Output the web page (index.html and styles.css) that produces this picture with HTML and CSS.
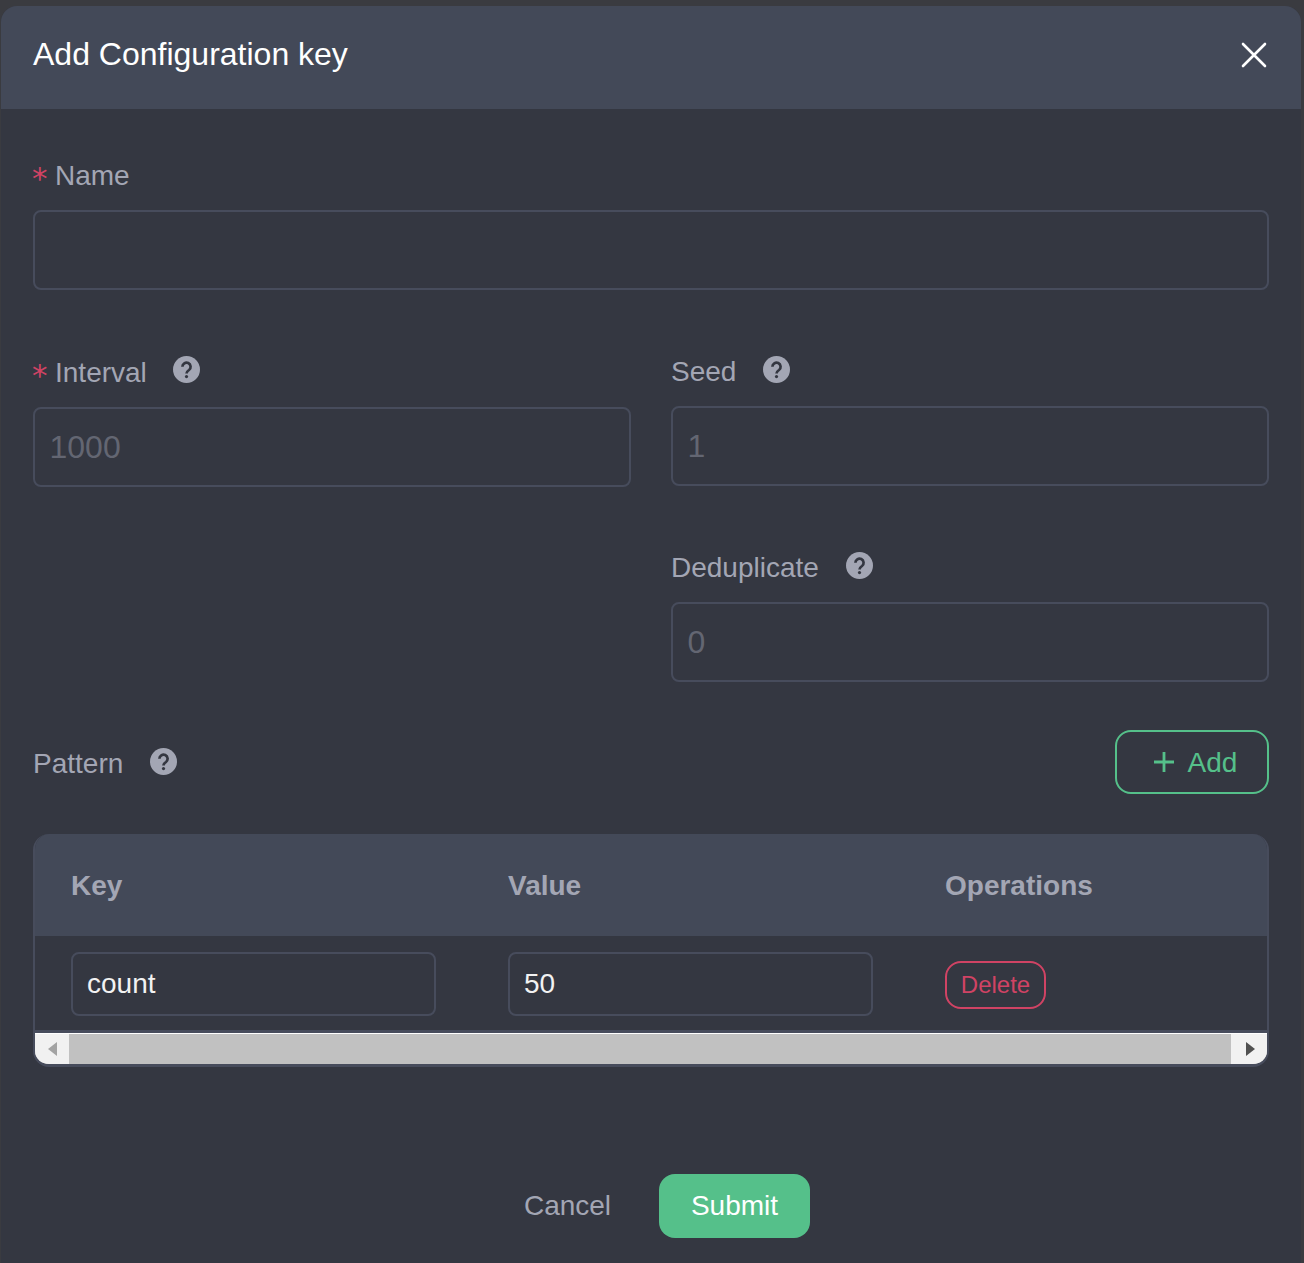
FILE: index.html

```html
<!DOCTYPE html>
<html>
<head>
<meta charset="utf-8"/>
<title>Add Configuration key</title>
<link rel="stylesheet" href="styles.css">
</head>
<body>
<svg class="icon-defs" width="0" height="0">
  <symbol id="help" viewBox="0 0 27 27">
    <circle class="help-disc" cx="13.5" cy="13.5" r="13.5"/>
    <path class="help-mark" d="M9.4 10.8a4.1 4.1 0 1 1 6.6 3.2c-1.6 1.1-2.5 1.8-2.5 3.4"/>
    <circle class="help-dot" cx="13.5" cy="20.6" r="1.6"/>
  </symbol>
</svg>
<div class="modal">
  <div class="modal-header">
    <h1>Add Configuration key</h1>
    <svg class="close-icon" viewBox="0 0 26 26"><path d="M2 2 L24 24 M24 2 L2 24"/></svg>
  </div>
  <div class="modal-body">
    <div class="form-item">
      <label class="form-label"><span class="required">*</span>Name</label>
      <div class="input"></div>
    </div>
    <div class="form-grid">
      <div class="form-item interval-item">
        <label class="form-label"><span class="required">*</span>Interval
          <svg class="help-icon"><use href="#help"/></svg>
        </label>
        <div class="input placeholder">1000</div>
      </div>
      <div class="form-item">
        <label class="form-label">Seed
          <svg class="help-icon"><use href="#help"/></svg>
        </label>
        <div class="input placeholder">1</div>
      </div>
      <div class="form-item dedup-item">
        <label class="form-label">Deduplicate
          <svg class="help-icon"><use href="#help"/></svg>
        </label>
        <div class="input placeholder">0</div>
      </div>
    </div>
    <div class="pattern-row">
      <label class="form-label">Pattern
        <svg class="help-icon"><use href="#help"/></svg>
      </label>
      <button class="btn-add">
        <svg class="plus-icon" viewBox="0 0 20 20"><path d="M10 0 V20 M0 10 H20"/></svg>
        Add
      </button>
    </div>
    <div class="table-wrap">
      <table class="pattern-table">
        <thead>
          <tr><th>Key</th><th>Value</th><th>Operations</th></tr>
        </thead>
        <tbody>
          <tr>
            <td><div class="cell-input">count</div></td>
            <td><div class="cell-input">50</div></td>
            <td><button class="btn-delete">Delete</button></td>
          </tr>
        </tbody>
      </table>
      <div class="scrollbar">
        <div class="scroll-btn"><span class="arrow-left"></span></div>
        <div class="scroll-thumb"></div>
        <div class="scroll-btn scroll-btn-right"><span class="arrow-right"></span></div>
      </div>
    </div>
    <div class="modal-footer">
      <button class="btn-cancel">Cancel</button>
      <button class="btn-submit">Submit</button>
    </div>
  </div>
</div>
</body>
</html>
```

FILE: styles.css

```css
html, body { margin: 0; height: 100%; }
body {
  height: 1263px; overflow: hidden;
  background: #3a3b40; padding: 6px 3px 0 1px; box-sizing: border-box;
  font-family: "Liberation Sans", Arial, sans-serif;
}
.icon-defs { display: block; }
.modal { background: #343741; border-radius: 16px 16px 0 0; height: 1257px; }
.modal-header {
  height: 103px; box-sizing: border-box; padding: 0 34px 6px 32px;
  background: #434958; border-radius: 16px 16px 0 0;
  display: flex; align-items: center; justify-content: space-between;
}
.modal-header h1 { margin: 0; font-size: 32px; font-weight: 400; color: #fff; }
.close-icon { width: 26px; height: 26px; fill: none; stroke: #fff; stroke-width: 2.6; stroke-linecap: round; }
.modal-body { padding: 45px 32px 0; }
.form-item { margin-bottom: 60px; }
.interval-item { padding-top: 1px; margin-bottom: 59px; }
.form-grid { display: grid; grid-template-columns: 598px 598px; column-gap: 40px; }
.dedup-item { grid-column: 2; margin-bottom: 48px; }
.form-label {
  display: flex; align-items: center; height: 44px; margin-bottom: 12px;
  font-size: 28px; color: #a3a6b4;
}
.required {
  display: inline-block; width: 14px; margin-right: 8px; height: 28px;
  color: #d04364; font-family: "DejaVu Sans", sans-serif; font-size: 31px; line-height: 32px;
  text-indent: -1px;
}
.help-icon { width: 27px; height: 27px; margin: -5px 0 0 27px; }
.interval-item .help-icon { margin-top: -7px; margin-left: 26.5px; }
.help-disc { fill: #a3a6b4; }
.help-mark { fill: none; stroke: #343741; stroke-width: 2.7; }
.help-dot { fill: #343741; }
.input {
  height: 80px; box-sizing: border-box; padding: 0 14.5px;
  border: 2px solid #474c5c; border-radius: 8px;
  display: flex; align-items: center; font-size: 32px;
}
.placeholder { color: #636672; }
.pattern-row { display: flex; justify-content: space-between; align-items: center; height: 64px; margin-bottom: 40px; }
.pattern-row .form-label { margin: 4px 0 0; }
.btn-add {
  width: 154px; height: 64px; box-sizing: border-box; padding: 2px 0 0 7px;
  background: none; border: 2px solid #55c08a; border-radius: 16px;
  color: #55c08a; font: 28px "Liberation Sans", Arial, sans-serif;
  display: flex; align-items: center; justify-content: center; gap: 14px;
}
.plus-icon { width: 20px; height: 20px; margin-top: -2px; fill: none; stroke: #55c08a; stroke-width: 2.8; }
.table-wrap {
  border: 2px solid #474c5c; border-top: 0; border-bottom-width: 3px;
  border-radius: 16px; overflow: hidden; background: #343741;
}
.pattern-table { width: 100%; border-collapse: collapse; table-layout: fixed; }
.pattern-table th:nth-child(1), .pattern-table th:nth-child(2) { width: 437px; }
.pattern-table th {
  box-sizing: border-box; height: 102px; padding: 2px 0 0 36px; text-align: left;
  background: #434958; color: #a3a6b4; font-size: 28px; font-weight: 700;
}
.pattern-table td {
  box-sizing: border-box; height: 95px; padding: 16px 0 0 36px; vertical-align: top;
  border-bottom: 3px solid #474c5c;
}
.cell-input {
  width: 365px; height: 64px; box-sizing: border-box; padding: 0 14px;
  border: 2px solid #474c5c; border-radius: 8px;
  display: flex; align-items: center; color: #f2f2f2; font-size: 28px;
}
.btn-delete {
  display: block; width: 101px; height: 48px; padding: 0; margin-top: 9px;
  background: none; border: 2px solid #d04364; border-radius: 16px;
  color: #d04364; font: 24px "Liberation Sans", Arial, sans-serif;
}
.scrollbar { display: flex; height: 31px; border-top: 1px solid #fff; box-sizing: border-box; background: #c1c1c1; }
.scroll-btn { width: 34px; background: #f1f1f1; display: flex; align-items: center; justify-content: center; }
.scroll-btn-right { width: 36px; padding-left: 2px; box-sizing: border-box; }
.scroll-thumb { flex: 1; }
.arrow-left { border: 7px solid transparent; border-left: 0; border-right: 9px solid #a3a3a3; }
.arrow-right { border: 7px solid transparent; border-right: 0; border-left: 9px solid #505050; }
.modal-footer { display: flex; justify-content: center; gap: 16px; margin-top: 107px; }
.modal-footer button {
  width: 151px; height: 64px; border: 0; border-radius: 16px; padding: 0;
  font: 28px "Liberation Sans", Arial, sans-serif;
}
.btn-cancel { background: none; color: #a3a6b4; }
.btn-submit { background: #55c08a; color: #fff; }
```
